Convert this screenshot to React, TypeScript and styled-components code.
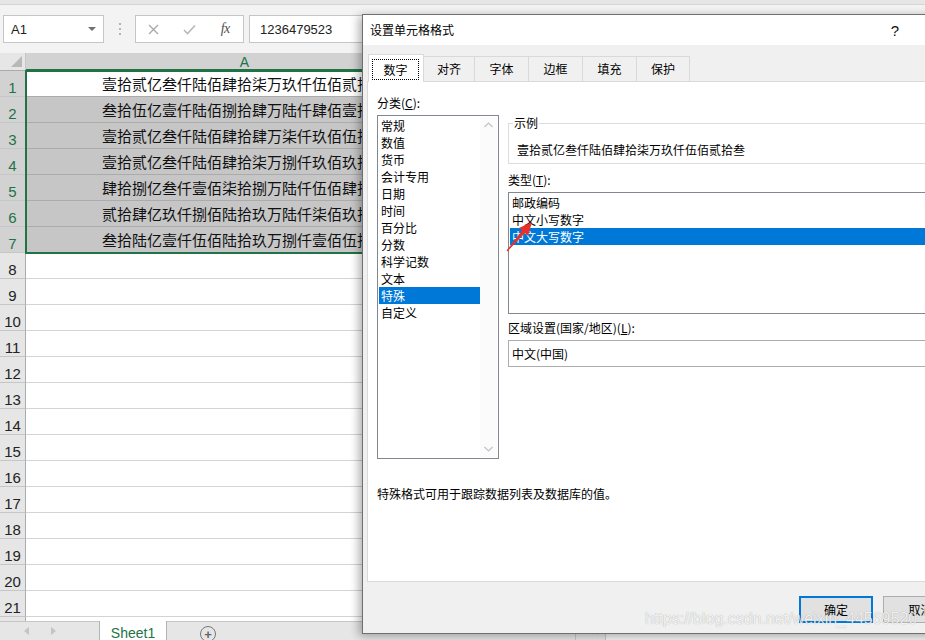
import React from 'react';
import styled, { createGlobalStyle } from 'styled-components';

const UI = `"Noto Sans CJK SC", "Microsoft YaHei", sans-serif`;
const LAT = `"Liberation Sans", Arial, sans-serif`;
const GREEN = '#217346';
const BLUE = '#0078d7';

const GlobalStyle = createGlobalStyle`
  html, body { margin: 0; padding: 0; width: 925px; height: 640px; overflow: hidden; background: #fff; }
  #root { width: 925px; height: 640px; }
  *, *::before, *::after { box-sizing: border-box; }
`;

const Page = styled.div`
  position: relative;
  width: 925px;
  height: 640px;
  overflow: hidden;
  display: flex;
  flex-direction: column;
  background: #f3f3f3;
  font-family: ${UI};
`;

const TopStrip = styled.div`
  flex: none;
  height: 5px;
  background: #e6e6e6;
  border-bottom: 1px solid #d4d4d4;
`;

const FormulaBar = styled.div`
  flex: none;
  height: 48px;
  display: flex;
  align-items: stretch;
  padding: 10px 3px;
`;

const NameBox = styled.div`
  width: 101px;
  background: #fff;
  border: 1px solid #c6c6c6;
  display: flex;
  align-items: center;
  justify-content: space-between;
  padding: 0 7px 0 7px;
  font: 13px ${LAT};
  color: #222;
`;

const DropTri = styled.span`
  width: 0;
  height: 0;
  border-left: 4px solid transparent;
  border-right: 4px solid transparent;
  border-top: 4px solid #707070;
`;

const Grip = styled.div`
  width: 31px;
  display: flex;
  flex-direction: column;
  align-items: center;
  justify-content: center;
  gap: 3px;
  & > span { width: 2px; height: 2px; background: #a0a0a0; border-radius: 50%; }
`;

const FxBox = styled.div`
  width: 109px;
  background: #fff;
  border: 1px solid #c6c6c6;
  display: flex;
`;

const FxSlot = styled.div`
  flex: 1;
  display: flex;
  align-items: center;
  justify-content: center;
`;

const FxText = styled.span`
  font: italic 14px "Liberation Serif", serif;
  color: #505050;
  letter-spacing: -0.5px;
`;

const FormulaInput = styled.div`
  flex: 1;
  margin-left: 5px;
  background: #fff;
  border: 1px solid #c6c6c6;
  display: flex;
  align-items: center;
  padding-left: 10px;
  font: 13px ${LAT};
  color: #222;
`;

const Sheet = styled.div`
  flex: 1;
  display: grid;
  grid-template-columns: 26px 438px 438px;
  grid-template-rows: 18px;
  grid-auto-rows: 26px;
  overflow: hidden;
  background: #fff;
`;

type Pos = { $row: number; $col: number };
const place = (p: Pos) => `grid-row: ${p.$row}; grid-column: ${p.$col};`;

const Corner = styled.div`
  grid-row: 1;
  grid-column: 1;
  background: #e6e6e6;
  border-right: 1px solid #c6c6c6;
  border-bottom: 1px solid #ababab;
  display: flex;
  align-items: flex-end;
  justify-content: flex-end;
  padding: 0 3px 3px 0;
`;

const CornerTri = styled.span`
  width: 0;
  height: 0;
  border-left: 11px solid transparent;
  border-bottom: 11px solid #b8b8b8;
`;

const ColHeader = styled.div<Pos & { $sel?: boolean }>`
  ${place}
  background: ${(p) => (p.$sel ? '#d2d2d2' : '#e6e6e6')};
  color: ${(p) => (p.$sel ? GREEN : '#222')};
  border-right: 1px solid #c6c6c6;
  border-bottom: ${(p) => (p.$sel ? `2px solid ${GREEN}` : '1px solid #ababab')};
  display: flex;
  align-items: center;
  justify-content: center;
  padding-top: 1px;
  font: 14px ${LAT};
`;

const RowHeader = styled.div<Pos & { $sel?: boolean }>`
  ${place}
  background: ${(p) => (p.$sel ? '#d2d2d2' : '#e6e6e6')};
  color: ${(p) => (p.$sel ? GREEN : '#222')};
  border-right: 1px solid #ababab;
  border-bottom: 1px solid #c6c6c6;
  display: flex;
  align-items: flex-end;
  justify-content: center;
  font: 15px/17px ${LAT};
`;

const Cell = styled.div<Pos & { $sel?: boolean; $active?: boolean }>`
  ${place}
  background: ${(p) => (p.$sel && !p.$active ? '#c6c6c6' : '#fff')};
  border-right: 1px solid #d4d4d4;
  border-bottom: 1px solid ${(p) => (p.$sel ? '#ababab' : '#d4d4d4')};
  display: flex;
  align-items: center;
  justify-content: center;
  white-space: nowrap;
  font: 15px/18px ${UI};
  color: #111;
  padding-top: 1px;
`;

const SelectionFrame = styled.div`
  grid-column: 2;
  grid-row: 2 / span 7;
  margin: -1px 0 -1px -1px;
  border: 2px solid ${GREEN};
  pointer-events: none;
`;

const TabBar = styled.div`
  flex: none;
  height: 19px;
  display: flex;
  background: #e6e6e6;
`;

const NavArea = styled.div`
  width: 99px;
  display: flex;
  align-items: center;
  gap: 22px;
  padding-left: 24px;
  border-top: 1px solid #c6c6c6;
`;

const NavTri = styled.span<{ $dir: 'l' | 'r' }>`
  width: 0;
  height: 0;
  border-top: 4px solid transparent;
  border-bottom: 4px solid transparent;
  ${(p) => (p.$dir === 'l' ? 'border-right: 5px solid #c4c4c4;' : 'border-left: 5px solid #c4c4c4;')}
`;

const SheetTab = styled.div`
  width: 68px;
  background: #fff;
  border-left: 1px solid #b4b4b4;
  border-right: 1px solid #b4b4b4;
  color: ${GREEN};
  font: 14px/19px ${LAT};
  text-align: center;
  padding-top: 3px;
`;

const TabBarRest = styled.div`
  flex: 1;
  display: flex;
  align-items: center;
  border-top: 1px solid #c6c6c6;
`;

const AddSheet = styled.div`
  margin-left: 33px;
  width: 16px;
  height: 16px;
  border: 1.5px solid #777;
  border-radius: 50%;
  display: flex;
  align-items: center;
  justify-content: center;
  color: #666;
  font: bold 13px/1 ${LAT};
  margin-top: 6px;
`;

const Splitter = styled.div`
  margin-left: auto;
  width: 31px;
  align-self: stretch;
  border-left: 1px solid #c6c6c6;
  border-right: 1px solid #c6c6c6;
  display: flex;
  align-items: center;
  justify-content: flex-end;
  padding-right: 7px;
`;

const ScrollTrack = styled.div`
  width: 319px;
  align-self: stretch;
  background: #f3f3f3;
`;

/* ---------- dialog ---------- */

const Dialog = styled.div`
  position: absolute;
  left: 362px;
  top: 14px;
  width: 601px;
  height: 620px;
  background: #f0f0f0;
  border: 1px solid #6f6f6f;
  box-shadow: -3px 2px 9px rgba(0, 0, 0, 0.32);
  display: flex;
  flex-direction: column;
  font: 12px/14px ${UI};
  color: #000;
`;

const TitleBar = styled.div`
  flex: none;
  height: 30px;
  background: #fff;
  display: flex;
  align-items: center;
  padding-left: 7px;
`;

const TitleText = styled.span`
  font-size: 12px;
`;

const TitleButton = styled.div<{ $w: number }>`
  width: ${(p) => p.$w}px;
  height: 30px;
  display: flex;
  align-items: center;
  justify-content: center;
  font: 15px ${LAT};
  color: #111;
  &:first-of-type { margin-left: auto; }
`;

const DialogBody = styled.div`
  flex: 1;
  display: flex;
  flex-direction: column;
  padding: 9px 4px 0 4px;
`;

const TabRow = styled.div`
  flex: none;
  height: 28px;
  margin: 0 0 -1px 1px;
  display: flex;
  align-items: flex-end;
  position: relative;
  z-index: 1;
`;

const Tab = styled.div<{ $active?: boolean; $w: number }>`
  width: ${(p) => p.$w}px;
  height: ${(p) => (p.$active ? 28 : 26)}px;
  margin-left: ${(p) => (p.$active ? 0 : -1)}px;
  background: ${(p) => (p.$active ? '#fff' : '#f0f0f0')};
  border: 1px solid #d9d9d9;
  border-bottom: ${(p) => (p.$active ? 'none' : '1px solid #d9d9d9')};
  position: relative;
  z-index: ${(p) => (p.$active ? 2 : 1)};
  display: flex;
  align-items: center;
  justify-content: center;
  padding: ${(p) => (p.$active ? '4px 4px 2px 3px' : '0 0 1px 0')};
`;

const FocusLabel = styled.span`
  flex: 1;
  align-self: stretch;
  border: 1px dotted #000;
  display: flex;
  align-items: center;
  justify-content: center;
`;

const Panel = styled.div`
  flex: none;
  height: 501px;
  background: #fff;
  border: 1px solid #d9d9d9;
  padding: 14px 9px 0 9px;
  display: flex;
  flex-direction: column;
`;

const TopRow = styled.div`
  display: flex;
  gap: 9px;
`;

const LeftCol = styled.div`
  width: 122px;
  display: flex;
  flex-direction: column;
`;

const RightCol = styled.div`
  flex: 1;
  display: flex;
  flex-direction: column;
`;

const FieldLabel = styled.div<{ $mt?: number }>`
  line-height: 14px;
  margin-top: ${(p) => p.$mt ?? 0}px;
  margin-bottom: 5px;
  white-space: nowrap;
`;

const ListBox = styled.div<{ $h: number }>`
  height: ${(p) => p.$h}px;
  border: 1px solid #828790;
  padding: 1px;
  display: flex;
  background: #fff;
`;

const ListItems = styled.div`
  flex: 1;
  display: flex;
  flex-direction: column;
`;

const ListItem = styled.div<{ $sel?: boolean }>`
  height: 17px;
  line-height: 17px;
  padding-left: 2px;
  white-space: nowrap;
  background: ${(p) => (p.$sel ? BLUE : 'transparent')};
  color: ${(p) => (p.$sel ? '#fff' : '#000')};
`;

const ScrollBar = styled.div`
  width: 17px;
  background: #fbfbfb;
  display: flex;
  flex-direction: column;
  justify-content: space-between;
  align-items: center;
  padding: 5px 0 5px;
`;

const SampleBox = styled.fieldset`
  margin: 20px 0 0 0;
  padding: 13px 8px 6px 8px;
  border: 1px solid #dcdcdc;
  min-inline-size: 0;
`;

const SampleLegend = styled.legend`
  margin-left: -4px;
  padding: 0 1px;
  line-height: 14px;
  font-size: 12px;
`;

const SampleText = styled.div`
  line-height: 14px;
  white-space: nowrap;
`;

const Combo = styled.div`
  height: 27px;
  border: 1px solid #adadad;
  background: #fff;
  display: flex;
  align-items: center;
  justify-content: space-between;
  padding: 0 6px 0 3px;
`;

const Description = styled.div`
  margin-top: 28px;
  line-height: 14px;
`;

const Footer = styled.div`
  flex: 1;
  display: flex;
  justify-content: flex-end;
  align-items: flex-start;
  gap: 10px;
  padding: 14px 0 0 0;
`;

const DlgButton = styled.div<{ $default?: boolean; $w: number }>`
  width: ${(p) => p.$w}px;
  height: 27px;
  background: #e1e1e1;
  border: ${(p) => (p.$default ? `2px solid ${BLUE}` : '1px solid #adadad')};
  display: flex;
  align-items: center;
  justify-content: center;
`;

const Annotation = styled.svg`
  position: absolute;
  left: 504px;
  top: 218px;
  width: 32px;
  height: 36px;
  pointer-events: none;
`;

const Watermark = styled.div`
  position: absolute;
  left: 645px;
  top: 610px;
  font: 16px ${LAT};
  color: rgba(255, 255, 255, 0.85);
  text-shadow: 0 0 1px rgba(0, 0, 0, 0.35);
  white-space: nowrap;
  pointer-events: none;
`;

const values = [
  '壹拾贰亿叁仟陆佰肆拾柒万玖仟伍佰贰拾叁',
  '叁拾伍亿壹仟陆佰捌拾肆万陆仟肆佰壹拾贰',
  '壹拾贰亿叁仟陆佰肆拾肆万柒仟玖佰伍拾陆',
  '壹拾贰亿叁仟陆佰肆拾柒万捌仟玖佰玖拾壹',
  '肆拾捌亿叁仟壹佰柒拾捌万陆仟伍佰肆拾贰',
  '贰拾肆亿玖仟捌佰陆拾玖万陆仟柒佰玖拾叁',
  '叁拾陆亿壹仟伍佰陆拾玖万捌仟壹佰伍拾肆',
];

const categories = ['常规', '数值', '货币', '会计专用', '日期', '时间', '百分比', '分数', '科学记数', '文本', '特殊', '自定义'];
const types = ['邮政编码', '中文小写数字', '中文大写数字'];
const tabs: { label: string; w: number }[] = [
  { label: '对齐', w: 52 },
  { label: '字体', w: 55 },
  { label: '边框', w: 55 },
  { label: '填充', w: 55 },
  { label: '保护', w: 54 },
];

const Chevron = ({ up }: { up?: boolean }) => (
  <svg width="9" height="6" viewBox="0 0 9 6">
    <polyline
      points={up ? '0.5,5 4.5,1 8.5,5' : '0.5,1 4.5,5 8.5,1'}
      fill="none"
      stroke="#c2c2c2"
      strokeWidth="1.2"
    />
  </svg>
);

export default function App() {
  const rows = Array.from({ length: 22 }, (_, i) => i + 1);
  return (
    <Page>
      <GlobalStyle />
      <TopStrip />
      <FormulaBar>
        <NameBox>
          <span>A1</span>
          <DropTri />
        </NameBox>
        <Grip>
          <span />
          <span />
          <span />
        </Grip>
        <FxBox>
          <FxSlot>
            <svg width="11" height="11" viewBox="0 0 11 11">
              <path d="M1 1 L10 10 M10 1 L1 10" stroke="#a8a8a8" strokeWidth="1.3" />
            </svg>
          </FxSlot>
          <FxSlot>
            <svg width="13" height="11" viewBox="0 0 13 11">
              <path d="M1 6 L4.5 9.5 L12 1.5" fill="none" stroke="#b8b8b8" strokeWidth="1.6" />
            </svg>
          </FxSlot>
          <FxSlot>
            <FxText>fx</FxText>
          </FxSlot>
        </FxBox>
        <FormulaInput>1236479523</FormulaInput>
      </FormulaBar>

      <Sheet>
        <Corner>
          <CornerTri />
        </Corner>
        <ColHeader $row={1} $col={2} $sel>
          A
        </ColHeader>
        <ColHeader $row={1} $col={3}>
          B
        </ColHeader>
        {rows.map((r) => {
          const sel = r <= 7;
          return (
            <React.Fragment key={r}>
              <RowHeader $row={r + 1} $col={1} $sel={sel}>
                {r}
              </RowHeader>
              <Cell $row={r + 1} $col={2} $sel={sel} $active={r === 1}>
                {sel ? values[r - 1] : ''}
              </Cell>
              <Cell $row={r + 1} $col={3} />
            </React.Fragment>
          );
        })}
        <SelectionFrame />
      </Sheet>

      <TabBar>
        <NavArea>
          <NavTri $dir="l" />
          <NavTri $dir="r" />
        </NavArea>
        <SheetTab>Sheet1</SheetTab>
        <TabBarRest>
          <AddSheet>+</AddSheet>
          <Splitter>
            <NavTri $dir="l" />
          </Splitter>
          <ScrollTrack />
        </TabBarRest>
      </TabBar>

      <Dialog>
        <TitleBar>
          <TitleText>设置单元格格式</TitleText>
          <TitleButton $w={46}>?</TitleButton>
          <TitleButton $w={44}>✕</TitleButton>
        </TitleBar>
        <DialogBody>
          <TabRow>
            <Tab $active $w={56}>
              <FocusLabel>数字</FocusLabel>
            </Tab>
            {tabs.map((t) => (
              <Tab key={t.label} $w={t.w}>
                {t.label}
              </Tab>
            ))}
          </TabRow>
          <Panel>
            <TopRow>
              <LeftCol>
                <FieldLabel>
                  分类(<u>C</u>):
                </FieldLabel>
                <ListBox $h={344}>
                  <ListItems>
                    {categories.map((c) => (
                      <ListItem key={c} $sel={c === '特殊'}>
                        {c}
                      </ListItem>
                    ))}
                  </ListItems>
                  <ScrollBar>
                    <Chevron up />
                    <Chevron />
                  </ScrollBar>
                </ListBox>
              </LeftCol>
              <RightCol>
                <SampleBox>
                  <SampleLegend>示例</SampleLegend>
                  <SampleText>壹拾贰亿叁仟陆佰肆拾柒万玖仟伍佰贰拾叁</SampleText>
                </SampleBox>
                <FieldLabel $mt={9}>
                  类型(<u>T</u>):
                </FieldLabel>
                <ListBox $h={122}>
                  <ListItems>
                    {types.map((t) => (
                      <ListItem key={t} $sel={t === '中文大写数字'}>
                        {t}
                      </ListItem>
                    ))}
                  </ListItems>
                </ListBox>
                <FieldLabel $mt={7}>
                  区域设置(国家/地区)(<u>L</u>):
                </FieldLabel>
                <Combo>
                  <span>中文(中国)</span>
                  <svg width="9" height="6" viewBox="0 0 9 6">
                    <polyline points="0.5,1 4.5,5 8.5,1" fill="none" stroke="#333" strokeWidth="1.2" />
                  </svg>
                </Combo>
              </RightCol>
            </TopRow>
            <Description>特殊格式可用于跟踪数据列表及数据库的值。</Description>
          </Panel>
          <Footer>
            <DlgButton $default $w={74}>
              确定
            </DlgButton>
            <DlgButton $w={75}>取消</DlgButton>
          </Footer>
        </DialogBody>
      </Dialog>

      <Annotation viewBox="504 218 32 36">
        <polygon
          points="506.55,250.6 522.1,230.6 518.96,227.9 532,222 528.05,235.7 524.9,233 507.45,251.4"
          fill="#e8302a"
        />
      </Annotation>

      <Watermark>https://blog.csdn.net/weixin_44569520</Watermark>
    </Page>
  );
}
